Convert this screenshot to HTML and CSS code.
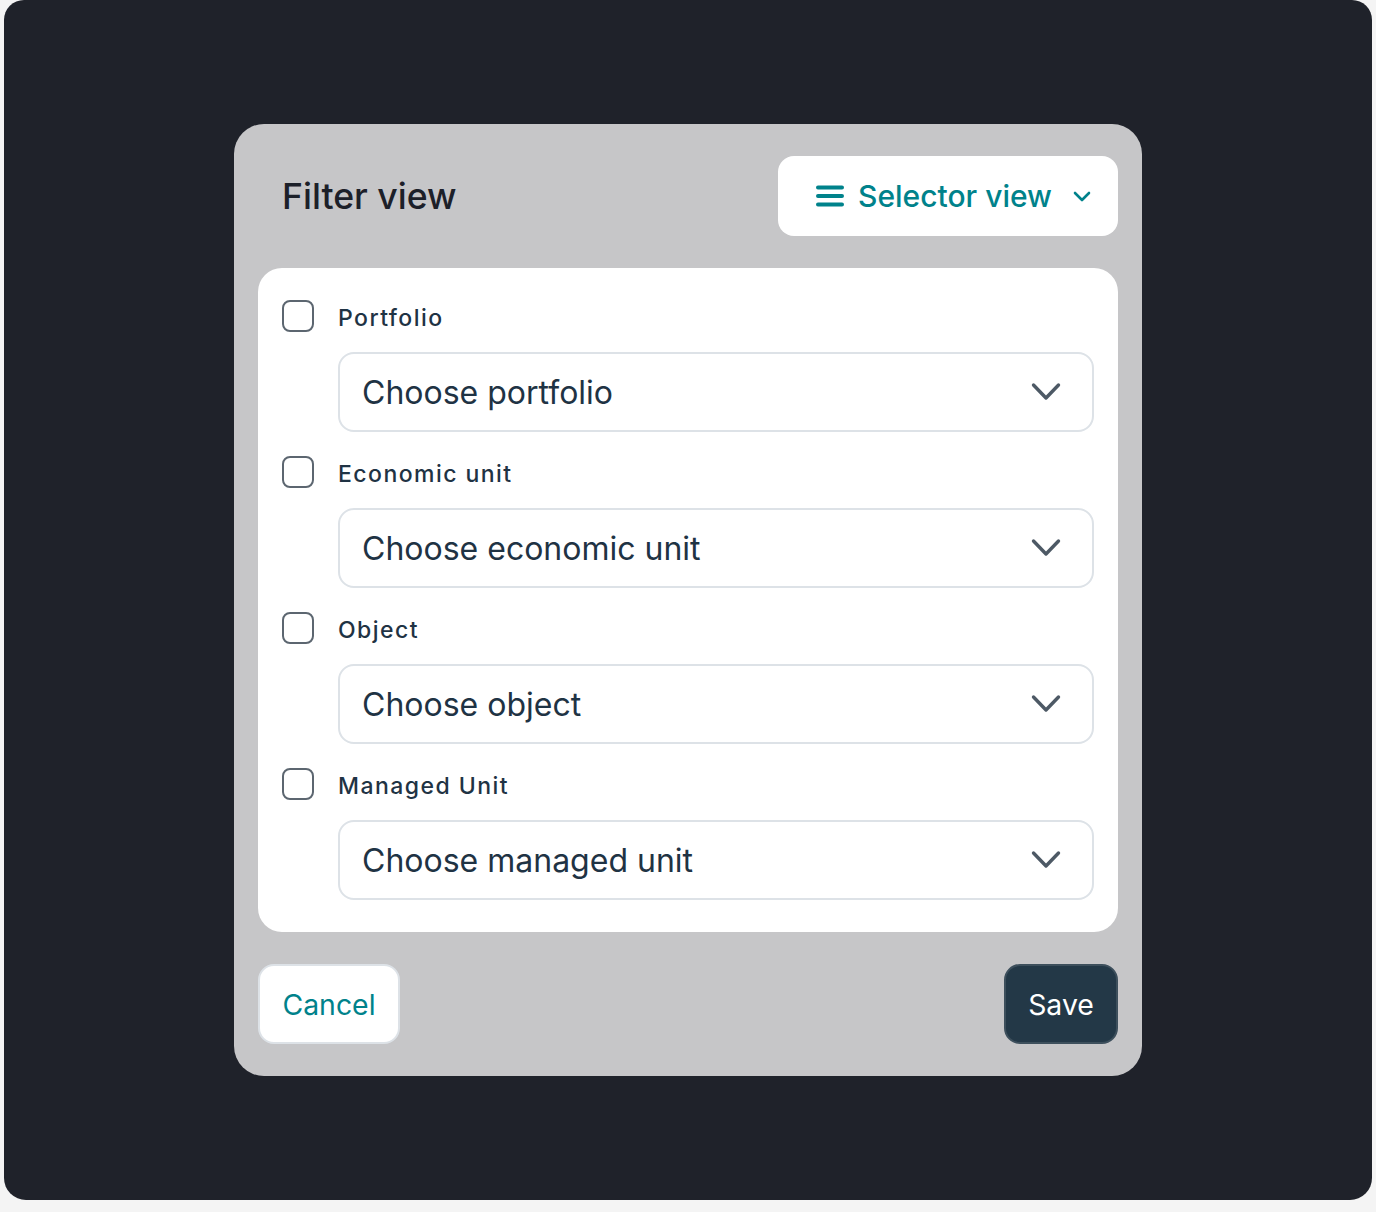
FILE: index.html
```html
<!DOCTYPE html>
<html lang="en">
<head>
<meta charset="utf-8">
<title>Filter view</title>
<link rel="stylesheet" href="styles.css">
</head>
<body>
<div class="frame">
  <div class="modal">
    <div class="modal-header">
      <h1 class="title">Filter view</h1>
      <button class="view-btn" type="button">
        <svg class="hamburger" width="28" height="22" viewBox="0 0 28 22" aria-hidden="true">
          <path d="M2 2.5h24M2 11h24M2 19.5h24" stroke="currentColor" stroke-width="4" stroke-linecap="round" fill="none"/>
        </svg>
        <span>Selector view</span>
        <svg class="small-chev" width="20" height="14" viewBox="0 0 20 14" aria-hidden="true">
          <path d="M3 4l7 7 7-7" stroke="currentColor" stroke-width="2.6" stroke-linecap="round" stroke-linejoin="round" fill="none"/>
        </svg>
      </button>
    </div>
    <div class="card">
      <div class="field">
        <label class="check-row"><span class="checkbox"></span><span class="label">Portfolio</span></label>
        <div class="select"><span>Choose portfolio</span><svg class="chev" width="30" height="20" viewBox="0 0 30 20" aria-hidden="true"><path d="M2.5 3l12.5 13 12.5-13" stroke="currentColor" stroke-width="3.4" stroke-linecap="round" stroke-linejoin="round" fill="none"/></svg></div>
      </div>
      <div class="field">
        <label class="check-row"><span class="checkbox"></span><span class="label">Economic unit</span></label>
        <div class="select"><span>Choose economic unit</span><svg class="chev" width="30" height="20" viewBox="0 0 30 20" aria-hidden="true"><path d="M2.5 3l12.5 13 12.5-13" stroke="currentColor" stroke-width="3.4" stroke-linecap="round" stroke-linejoin="round" fill="none"/></svg></div>
      </div>
      <div class="field">
        <label class="check-row"><span class="checkbox"></span><span class="label">Object</span></label>
        <div class="select"><span>Choose object</span><svg class="chev" width="30" height="20" viewBox="0 0 30 20" aria-hidden="true"><path d="M2.5 3l12.5 13 12.5-13" stroke="currentColor" stroke-width="3.4" stroke-linecap="round" stroke-linejoin="round" fill="none"/></svg></div>
      </div>
      <div class="field">
        <label class="check-row"><span class="checkbox"></span><span class="label">Managed Unit</span></label>
        <div class="select"><span>Choose managed unit</span><svg class="chev" width="30" height="20" viewBox="0 0 30 20" aria-hidden="true"><path d="M2.5 3l12.5 13 12.5-13" stroke="currentColor" stroke-width="3.4" stroke-linecap="round" stroke-linejoin="round" fill="none"/></svg></div>
      </div>
    </div>
    <div class="modal-footer">
      <button class="btn btn-cancel" type="button">Cancel</button>
      <button class="btn btn-save" type="button">Save</button>
    </div>
  </div>
</div>
</body>
</html>
```

FILE: styles.css
```css
* { box-sizing: border-box; }
html, body { margin: 0; padding: 0; }
body {
  background: #f4f4f4;
  font-family: Inter, "Noto Sans", sans-serif;
  padding: 0 4px 12px 4px;
}
.frame {
  height: 1200px;
  background: #1f222a;
  border-radius: 20px 20px 22px 22px;
  padding-top: 124px;
  display: flex;
  justify-content: center;
}
.modal {
  width: 908px;
  height: 952px;
  background: #c6c6c8;
  border-radius: 30px;
  padding: 32px 24px;
  display: flex;
  flex-direction: column;
  gap: 32px;
}
.modal-header {
  display: flex;
  align-items: center;
  justify-content: space-between;
  height: 80px;
}
.title {
  margin: 0 0 0 24px;
  font-size: 35.6px;
  font-weight: 500;
  color: #1c2029;
  letter-spacing: 0;
}
.view-btn {
  width: 340px;
  height: 80px;
  background: #fff;
  border: none;
  border-radius: 16px;
  display: flex;
  align-items: center;
  padding: 0 26px 0 38px;
  gap: 14px;
  color: #00828b;
  font-family: inherit;
  font-size: 30px;
  font-weight: 500;
  cursor: pointer;
}
.view-btn span { flex: 1; text-align: left; white-space: nowrap; }
.hamburger { flex: none; }
.small-chev { flex: none; }
.card {
  background: #fff;
  border-radius: 24px;
  padding: 32px 24px;
  display: flex;
  flex-direction: column;
  gap: 24px;
}
.field {
  display: flex;
  flex-direction: column;
  gap: 20px;
}
.check-row {
  display: flex;
  align-items: center;
  gap: 24px;
  height: 32px;
}
.checkbox {
  width: 32px;
  height: 32px;
  border: 2px solid #5c6670;
  border-radius: 8px;
  flex: none;
}
.label {
  font-size: 23px;
  font-weight: 500;
  letter-spacing: 1.45px;
  color: #1f3344;
  padding-top: 3px;
}
.select {
  margin-left: 56px;
  height: 80px;
  border: 2px solid #dde2e7;
  border-radius: 16px;
  display: flex;
  align-items: center;
  justify-content: space-between;
  padding: 0 31px 0 22px;
  font-size: 32px;
  color: #1f3344;
}
.chev { color: #4d5965; flex: none; }
.modal-footer {
  display: flex;
  justify-content: space-between;
  align-items: center;
}
.btn {
  height: 80px;
  border-radius: 16px;
  font-family: inherit;
  font-size: 28.4px;
  padding: 0;
  cursor: pointer;
}
.btn-cancel {
  width: 142px;
  background: #fff;
  border: 2px solid #dde2e7;
  color: #00828b;
}
.btn-save {
  width: 114px;
  background: #233847;
  border: 2px solid #3d4f5c;
  color: #fff;
}
```
